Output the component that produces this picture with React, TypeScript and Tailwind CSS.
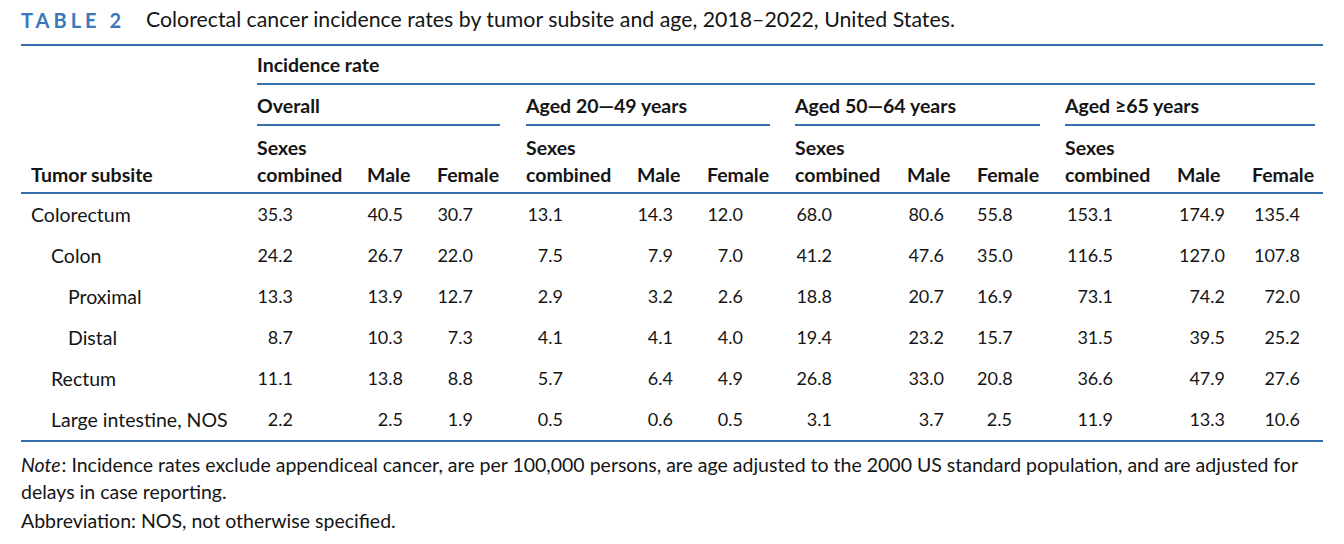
const cols =
  "grid grid-cols-[236px_110px_70px_89px_111px_70px_88px_112px_70px_88px_112px_75px_73px]";

const padRight = [
  "pr-[74px]",
  "pr-[34px]",
  "pr-[53px]",
  "pr-[74px]",
  "pr-[34px]",
  "pr-[52px]",
  "pr-[75px]",
  "pr-[33px]",
  "pr-[53px]",
  "pr-[64px]",
  "pr-[27px]",
  "pr-[25px]",
];

const groups = [
  { label: "Overall", mr: "mr-[26px]" },
  { label: "Aged 20\u201449 years", mr: "mr-[25px]" },
  { label: "Aged 50\u201464 years", mr: "mr-[25px]" },
  { label: "Aged \u226565 years", mr: "mr-[10px]" },
];

const rows = [
  { name: "Colorectum", indent: "pl-[10px]", v: ["35.3", "40.5", "30.7", "13.1", "14.3", "12.0", "68.0", "80.6", "55.8", "153.1", "174.9", "135.4"] },
  { name: "Colon", indent: "pl-[30px]", v: ["24.2", "26.7", "22.0", "7.5", "7.9", "7.0", "41.2", "47.6", "35.0", "116.5", "127.0", "107.8"] },
  { name: "Proximal", indent: "pl-[47px]", v: ["13.3", "13.9", "12.7", "2.9", "3.2", "2.6", "18.8", "20.7", "16.9", "73.1", "74.2", "72.0"] },
  { name: "Distal", indent: "pl-[47px]", v: ["8.7", "10.3", "7.3", "4.1", "4.1", "4.0", "19.4", "23.2", "15.7", "31.5", "39.5", "25.2"] },
  { name: "Rectum", indent: "pl-[30px]", v: ["11.1", "13.8", "8.8", "5.7", "6.4", "4.9", "26.8", "33.0", "20.8", "36.6", "47.9", "27.6"] },
  { name: "Large intestine, NOS", indent: "pl-[30px]", v: ["2.2", "2.5", "1.9", "0.5", "0.6", "0.5", "3.1", "3.7", "2.5", "11.9", "13.3", "10.6"] },
];

export default function App() {
  return (
    <div className="w-[1344px] h-[544px] bg-white px-[21px] text-[#151515] font-['Lato','Noto_Sans',sans-serif] overflow-hidden">
      {/* Caption */}
      <div className="h-[40px] flex items-center">
        <span className="text-[20px] font-bold text-[#3a78bb] tracking-[0.2em] mr-[21px]">TABLE 2</span>
        <span className="text-[21.3px]">
          Colorectal cancer incidence rates by tumor subsite and age, 2018–2022, United States.
        </span>
      </div>

      <div className="mt-[4px] h-[2px] bg-[#3470ae]" />

      {/* Header */}
      <div className="text-[19.5px] font-bold">
        <div className={cols}>
          <div />
          <div className="col-span-12 h-[39px] flex items-center border-b-2 border-[#3470ae] mr-[10px]">
            Incidence rate
          </div>
        </div>
        <div className={cols}>
          <div />
          {groups.map((g) => (
            <div
              key={g.label}
              className={`col-span-3 h-[41px] flex items-end pb-[6px] leading-[24px] border-b-2 border-[#3470ae] ${g.mr}`}
            >
              {g.label}
            </div>
          ))}
        </div>
        <div className={`${cols} h-[66px] items-end pb-[4px] leading-[27px]`}>
          <div className="pl-[10px]">Tumor subsite</div>
          {groups.map((g) => (
            <div key={g.label} className="contents">
              <div>
                Sexes
                <br />
                combined
              </div>
              <div>Male</div>
              <div>Female</div>
            </div>
          ))}
        </div>
      </div>

      <div className="h-[2px] bg-[#3470ae]" />

      {/* Body */}
      <div className="text-[19.5px]">
        {rows.map((r) => (
          <div key={r.name} className={`${cols} h-[41px] items-center`}>
            <div className={r.indent}>{r.name}</div>
            {r.v.map((val, i) => (
              <div key={i} className={`text-right text-[18px] tabular-nums ${padRight[i]}`}>
                {val}
              </div>
            ))}
          </div>
        ))}
      </div>

      <div className="h-[2px] bg-[#3470ae]" />

      {/* Notes */}
      <div className="pt-[9px] text-[19.5px] leading-[27px]">
        <p>
          <span className="whitespace-nowrap">
            <i className="pr-[1px]">Note</i>: Incidence rates exclude appendiceal cancer, are per 100,000 persons,
            are age adjusted to the 2000 US standard population, and are adjusted for
          </span>
          <br />
          delays in case reporting.
        </p>
        <p className="mt-[2px]">Abbreviation: NOS, not otherwise specified.</p>
      </div>
    </div>
  );
}
